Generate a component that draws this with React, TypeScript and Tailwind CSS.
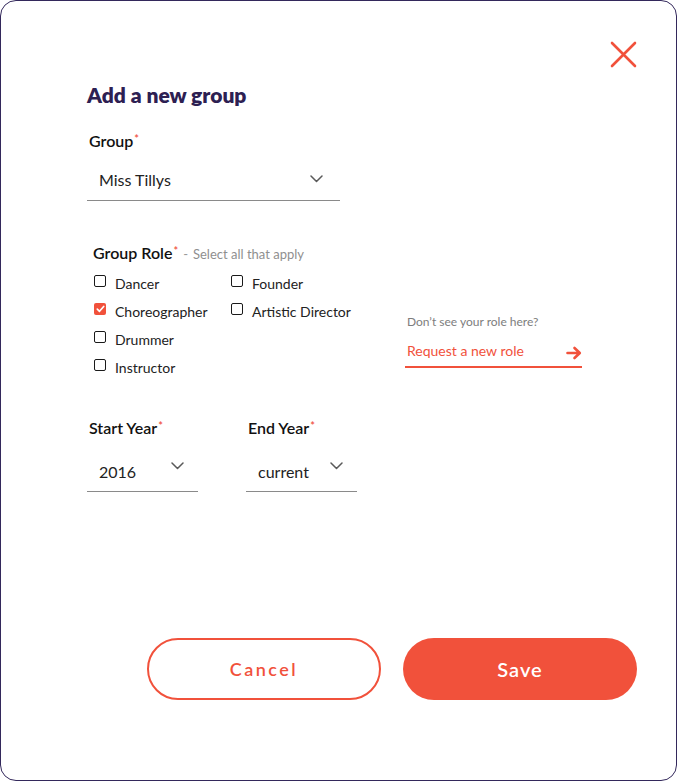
import React from "react";

const ORANGE = "#f1513b";

function Star() {
  return <span className="text-[#f0503c] text-[11px] align-top relative top-[-2px] ml-[1px]">*</span>;
}

function Chevron() {
  return (
    <svg width="13" height="8" viewBox="0 0 13 8" fill="none">
      <path d="M1 1 L6.5 6.5 L12 1" stroke="#5a5a5a" strokeWidth="1.5" strokeLinecap="round" strokeLinejoin="round" />
    </svg>
  );
}

function Box({ checked }: { checked?: boolean }) {
  if (checked) {
    return (
      <div className="w-[12px] h-[12px] rounded-[2px] bg-[#f1513b] flex items-center justify-center shrink-0">
        <svg width="9" height="8" viewBox="0 0 9 8" fill="none">
          <path d="M1.3 4.2 L3.5 6.3 L7.7 1.5" stroke="white" strokeWidth="1.7" strokeLinecap="round" strokeLinejoin="round" />
        </svg>
      </div>
    );
  }
  return <div className="w-[12px] h-[12px] rounded-[2px] border-[1.5px] border-[#1a1a1a] bg-white shrink-0" />;
}

function Check({ label, checked }: { label: string; checked?: boolean }) {
  return (
    <div className="flex items-start h-[28px]">
      <div className="mt-[5px]">
        <Box checked={checked} />
      </div>
      <span className="ml-[9px] text-[14px] leading-[28px] text-[#222] whitespace-nowrap">{label}</span>
    </div>
  );
}

export default function App() {
  return (
    <div
      className="w-[677px] h-[781px] bg-white border border-[#33285b] rounded-[16px] flex flex-col"
      style={{ fontFamily: "Lato, 'Noto Sans', sans-serif" }}
    >
      <div className="flex justify-end pt-[40px] pr-[39px]">
        <svg width="27" height="27" viewBox="0 0 27 27" fill="none">
          <path d="M2 2 L25 25 M25 2 L2 25" stroke={ORANGE} strokeWidth="2.6" strokeLinecap="round" />
        </svg>
      </div>

      <div className="pl-[86px] flex flex-col">
        <h1 className="mt-[15px] text-[21px] leading-[24px] font-extrabold text-[#2d2052]">Add a new group</h1>

        <div className="mt-[24px] ml-[2px] text-[16px] leading-[20px] font-semibold text-[#111]">
          Group
          <Star />
        </div>

        <div className="mt-[19px] w-[253px] border-b border-[#8a8a8a] pb-[10px] pl-[12px] pr-[17px] flex items-start justify-between">
          <span className="text-[16px] leading-[20px] text-[#222]">Miss Tillys</span>
          <div className="mt-[5px]">
            <Chevron />
          </div>
        </div>

        <div className="mt-[42px] ml-[6px] text-[16px] leading-[20px] font-semibold text-[#111] flex items-baseline">
          <span>
            Group Role
            <Star />
          </span>
          <span className="ml-[5px] text-[#9a9a9a] font-normal text-[13px]">-</span>
          <span className="ml-[5px] text-[13px] text-[#8f8f8f] font-normal">Select all that apply</span>
        </div>

        <div className="mt-[6px] flex">
          <div className="ml-[7px] flex">
            <div className="w-[137px] flex flex-col">
              <Check label="Dancer" />
              <Check label="Choreographer" checked />
              <Check label="Drummer" />
              <Check label="Instructor" />
            </div>
            <div className="w-[174px] flex flex-col">
              <Check label="Founder" />
              <Check label="Artistic Director" />
            </div>
          </div>
          <div className="mt-[45px] flex flex-col">
            <span className="pl-[2px] text-[12px] leading-[14px] text-[#7d7d7d]">Don’t see your role here?</span>
            <div className="mt-[13px] w-[177px] border-b-2 border-[#f1513b] pb-[6px] pl-[2px] flex items-center justify-between">
              <span className="text-[14px] leading-[16px] text-[#f1513b]">Request a new role</span>
              <svg width="16" height="14" viewBox="0 0 16 14" fill="none" className="mt-[4px]">
                <path d="M1.5 7 H13.5 M8.5 2 L13.8 7 L8.5 12" stroke={ORANGE} strokeWidth="2.6" strokeLinecap="round" strokeLinejoin="round" />
              </svg>
            </div>
          </div>
        </div>

        <div className="mt-[36px] flex gap-[48px]">
          <div className="flex flex-col w-[111px]">
            <div className="ml-[2px] text-[16px] leading-[20px] font-semibold text-[#111]">
              Start Year
              <Star />
            </div>
            <div className="mt-[24px] border-b border-[#8a8a8a] pb-[9px] pl-[12px] pr-[14px] flex items-start justify-between">
              <span className="text-[16px] leading-[20px] text-[#222]">2016</span>
              <div className="mt-[0px]">
                <Chevron />
              </div>
            </div>
          </div>
          <div className="flex flex-col w-[111px]">
            <div className="ml-[2px] text-[16px] leading-[20px] font-semibold text-[#111]">
              End Year
              <Star />
            </div>
            <div className="mt-[24px] border-b border-[#8a8a8a] pb-[9px] pl-[12px] pr-[14px] flex items-start justify-between">
              <span className="text-[16px] leading-[20px] text-[#222]">current</span>
              <div className="mt-[0px]">
                <Chevron />
              </div>
            </div>
          </div>
        </div>
      </div>

      <div className="mt-auto pb-[80px] pr-[39px] flex justify-end gap-[22px]">
        <button className="w-[234px] h-[62px] rounded-full border-2 border-[#f1513b] bg-white text-[#f1513b] text-[18px] font-semibold tracking-[2.5px]">
          Cancel
        </button>
        <button className="w-[234px] h-[62px] rounded-full bg-[#f1513b] text-white text-[20px] font-semibold tracking-[1px]">
          Save
        </button>
      </div>
    </div>
  );
}
